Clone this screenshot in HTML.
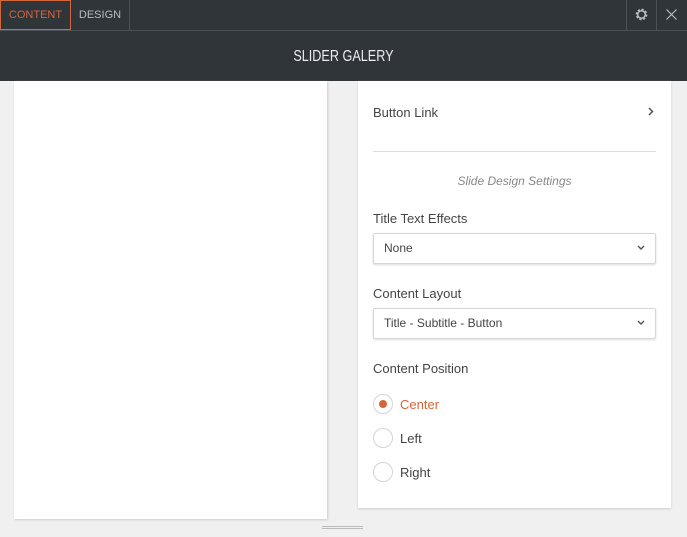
<!DOCTYPE html>
<html><head><style>
*{box-sizing:border-box;margin:0;padding:0}
body{width:687px;height:537px;background:#f0f0f0;font-family:"Liberation Sans",sans-serif;position:relative;overflow:hidden;color:#444}
.top{position:absolute;left:0;top:0;width:687px;height:31px;background:#30353a;border-bottom:1px solid #4c5257}
.tab{position:absolute;top:0;height:30px;line-height:30px;font-size:11px;color:#b9bcbf;text-align:center}
.hdr{position:absolute;left:0;top:31px;width:687px;height:50px;background:#30353a;color:#eceded;font-size:16px;text-align:center;line-height:52px}
.hdr span{display:inline-block;transform:scaleX(0.79)}
.lp{position:absolute;left:14px;top:81px;width:313px;height:438px;background:#fff;box-shadow:1px 1px 2px #ccc}
.rp{position:absolute;left:358px;top:81px;width:313px;height:427px;background:#fff;box-shadow:0 1px 2px #ccc}
.t{position:absolute;font-size:13px;color:#444}
.sel{position:absolute;left:373px;width:283px;height:31px;border:1px solid #d6d6d6;border-radius:2px;box-shadow:0 1px 2px #ddd;font-size:12px;line-height:29px;padding-left:10px;color:#444}
.sel svg{position:absolute;right:10px;top:11px}
.rad{position:absolute;left:373px;width:20px;height:20px;border:1px solid #d4d4d4;border-radius:50%}
</style></head><body>
<div class="top">
<div class="tab" style="left:0;width:71px;border:1px solid #d4673a;color:#d4673a;height:30px;line-height:28px">CONTENT</div>
<div class="tab" style="left:71px;width:59px;border-right:1px solid #4c5257">DESIGN</div>
<div style="position:absolute;left:626px;top:0;width:1px;height:30px;background:#4c5257"></div>
<div style="position:absolute;left:656px;top:0;width:1px;height:30px;background:#4c5257"></div>
<svg style="position:absolute;left:634px;top:7px" width="15" height="15" viewBox="0 0 16 16"><circle cx="8" cy="8" r="5" fill="none" stroke="#b9bcbf" stroke-width="2.5" stroke-dasharray="2.2 1.7"/><circle cx="8" cy="8" r="4" fill="none" stroke="#b9bcbf" stroke-width="1.6"/></svg>
<svg style="position:absolute;left:666px;top:9px" width="11" height="11" viewBox="0 0 11 11"><path d="M0.5 0.5L10.5 10.5M10.5 0.5L0.5 10.5" stroke="#b9bcbf" stroke-width="1.2"/></svg>
</div>
<div class="hdr"><span>SLIDER GALERY</span></div>
<div class="lp"></div>
<div class="rp"></div>
<div class="t" style="left:373px;top:105px">Button Link</div>
<svg style="position:absolute;left:648px;top:107px" width="6" height="9" viewBox="0 0 6 9"><path d="M1 1L4.5 4.5L1 8" stroke="#555" stroke-width="1.5" fill="none"/></svg>
<div style="position:absolute;left:373px;top:151px;width:283px;height:1px;background:#ddd"></div>
<div class="t" style="left:373px;width:283px;text-align:center;top:174px;font-size:12px;font-style:italic;color:#888">Slide Design Settings</div>
<div class="t" style="left:373px;top:211px">Title Text Effects</div>
<div class="sel" style="top:233px">None<svg width="8" height="6" viewBox="0 0 8 6"><path d="M1 1L4 4L7 1" stroke="#555" stroke-width="1.4" fill="none"/></svg></div>
<div class="t" style="left:373px;top:286px">Content Layout</div>
<div class="sel" style="top:308px">Title - Subtitle - Button<svg width="8" height="6" viewBox="0 0 8 6"><path d="M1 1L4 4L7 1" stroke="#555" stroke-width="1.4" fill="none"/></svg></div>
<div class="t" style="left:373px;top:361px">Content Position</div>
<div class="rad" style="top:394px"><div style="position:absolute;left:5px;top:5px;width:8px;height:8px;border-radius:50%;background:#d4673a"></div></div>
<div class="t" style="left:400px;top:397px;color:#d4673a">Center</div>
<div class="rad" style="top:428px"></div>
<div class="t" style="left:400px;top:431px">Left</div>
<div class="rad" style="top:462px"></div>
<div class="t" style="left:400px;top:465px">Right</div>
<div style="position:absolute;left:322px;top:526px;width:41px;height:3px;border-top:1px solid #bbb;border-bottom:1px solid #bbb"></div>
</body></html>
